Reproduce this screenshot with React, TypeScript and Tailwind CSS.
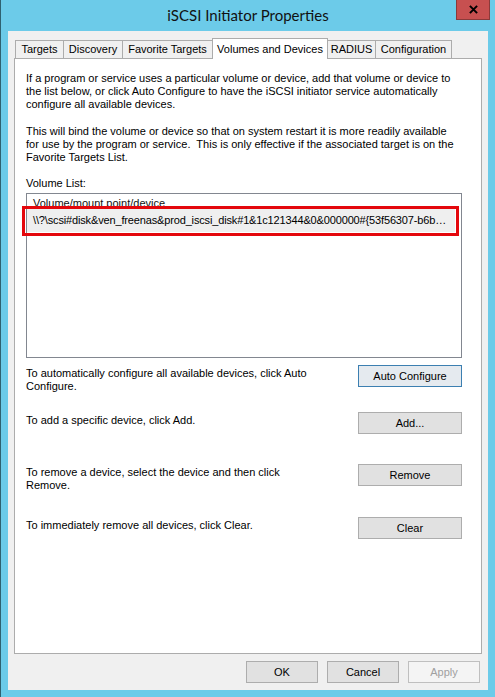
import React from 'react'

const tabs = [
  { label: 'Targets', w: 'w-[49px]' },
  { label: 'Discovery', w: 'w-[60px]' },
  { label: 'Favorite Targets', w: 'w-[91px]' },
  { label: 'Volumes and Devices', w: 'w-[116px]', active: true },
  { label: 'RADIUS', w: 'w-[49px]' },
  { label: 'Configuration', w: 'w-[77px]' },
]

const Btn = ({ children, focused }: { children: React.ReactNode; focused?: boolean }) => (
  <button
    className={
      'h-[22px] w-[104px] shrink-0 border text-[11px] leading-none text-black ' +
      (focused ? 'border-[#3c7fb1] bg-[#e5eaef]' : 'border-[#adadad] bg-[#e1e1e1]')
    }
  >
    {children}
  </button>
)

export default function App() {
  return (
    <div className="flex h-[697px] w-[495px] flex-col border-l border-[#2f6170] bg-[#6ccbe9] font-['Liberation_Sans',Arial,sans-serif]">
      {/* title bar */}
      <div className="relative flex h-[31px] shrink-0 items-center justify-center">
        <span className="font-['Lato',sans-serif] text-[15px] text-[#111]">iSCSI Initiator Properties</span>
        <div className="absolute right-[5px] top-0 flex h-[20px] w-[34px] items-center justify-center border border-t-0 border-[#8a3a3a] bg-[#c75050]">
          <svg viewBox="0 0 10 10" className="h-[9px] w-[9px]">
            <path d="M1 1 L9 9 M9 1 L1 9" stroke="#000" strokeWidth="2.2" />
          </svg>
        </div>
      </div>

      {/* client area */}
      <div className="mx-[7px] flex flex-1 flex-col bg-[#f0f0f0] text-[11px] leading-[13px] text-black">
        {/* tabs */}
        <div className="ml-[8px] mt-[7px] flex h-[20px] items-end">
          {tabs.map((t) =>
            t.active ? (
              <div
                key={t.label}
                className={`${t.w} relative z-10 -mb-px -ml-px flex h-[21px] items-start justify-center border border-b-0 border-[#acacac] bg-white pt-[4px]`}
              >
                {t.label}
              </div>
            ) : (
              <div
                key={t.label}
                className={`${t.w} -ml-px flex h-[18px] items-center justify-center border border-b-0 border-[#acacac] bg-[#f0f0f0]`}
              >
                {t.label}
              </div>
            ),
          )}
        </div>

        {/* tab panel */}
        <div className="mx-[6px] flex h-[596px] flex-col border border-[#acacac] bg-white pl-[11px] pt-[13px]">
          <p className="w-[432px]">
            If a program or service uses a particular volume or device, add that volume or device to the list
            below, or click Auto Configure to have the iSCSI initiator service automatically configure all
            available devices.
          </p>
          <p className="mt-[14px] w-[432px]">
            This will bind the volume or device so that on system restart it is more readily available for use by
            the program or service.&nbsp; This is only effective if the associated target is on the Favorite
            Targets List.
          </p>
          <p className="mt-[13px]">Volume List:</p>

          {/* volume list */}
          <div className="mt-[3px] h-[165px] w-[436px] border border-[#828790] bg-white">
            <div className="h-[15px] pl-[6px] pt-[3px] text-[#111]">Volume/mount point/device</div>
            <div className="relative flex h-[23px] w-[428px] items-center bg-[#efefef] pl-[6px]">
              <span className="whitespace-nowrap tracking-[-0.15px]">
                \\?\scsi#disk&amp;ven_freenas&amp;prod_iscsi_disk#1&amp;1c121344&amp;0&amp;000000#{'{'}53f56307-b6b…
              </span>
              <div className="absolute -bottom-[4px] -left-[5px] -right-[4px] -top-[3px] border-[3px] border-[#e4070c]" />
            </div>
          </div>

          {/* actions */}
          <div className="mt-[7px] flex w-[436px] flex-col">
            <div className="flex h-[47px] items-start justify-between">
              <p className="w-[300px] pt-[2px]">To automatically configure all available devices, click Auto Configure.</p>
              <Btn focused>Auto Configure</Btn>
            </div>
            <div className="flex h-[52px] items-start justify-between">
              <p className="pt-[2px]">To add a specific device, click Add.</p>
              <Btn>Add...</Btn>
            </div>
            <div className="flex h-[53px] items-start justify-between">
              <p className="w-[270px] pt-[2px]">To remove a device, select the device and then click Remove.</p>
              <Btn>Remove</Btn>
            </div>
            <div className="flex items-start justify-between">
              <p className="pt-[2px]">To immediately remove all devices, click Clear.</p>
              <Btn>Clear</Btn>
            </div>
          </div>
        </div>

        {/* dialog buttons */}
        <div className="mr-[8px] mt-[7px] flex justify-end gap-[9px]">
          <button className="h-[22px] w-[72px] border border-[#adadad] bg-[#e1e1e1] text-[11px]">OK</button>
          <button className="h-[22px] w-[72px] border border-[#adadad] bg-[#e1e1e1] text-[11px]">Cancel</button>
          <button className="h-[22px] w-[72px] border border-[#bfbfbf] bg-[#f4f4f4] text-[11px] text-[#a0a0a0]">
            Apply
          </button>
        </div>
      </div>
      <div className="h-[7px] shrink-0" />
    </div>
  )
}
